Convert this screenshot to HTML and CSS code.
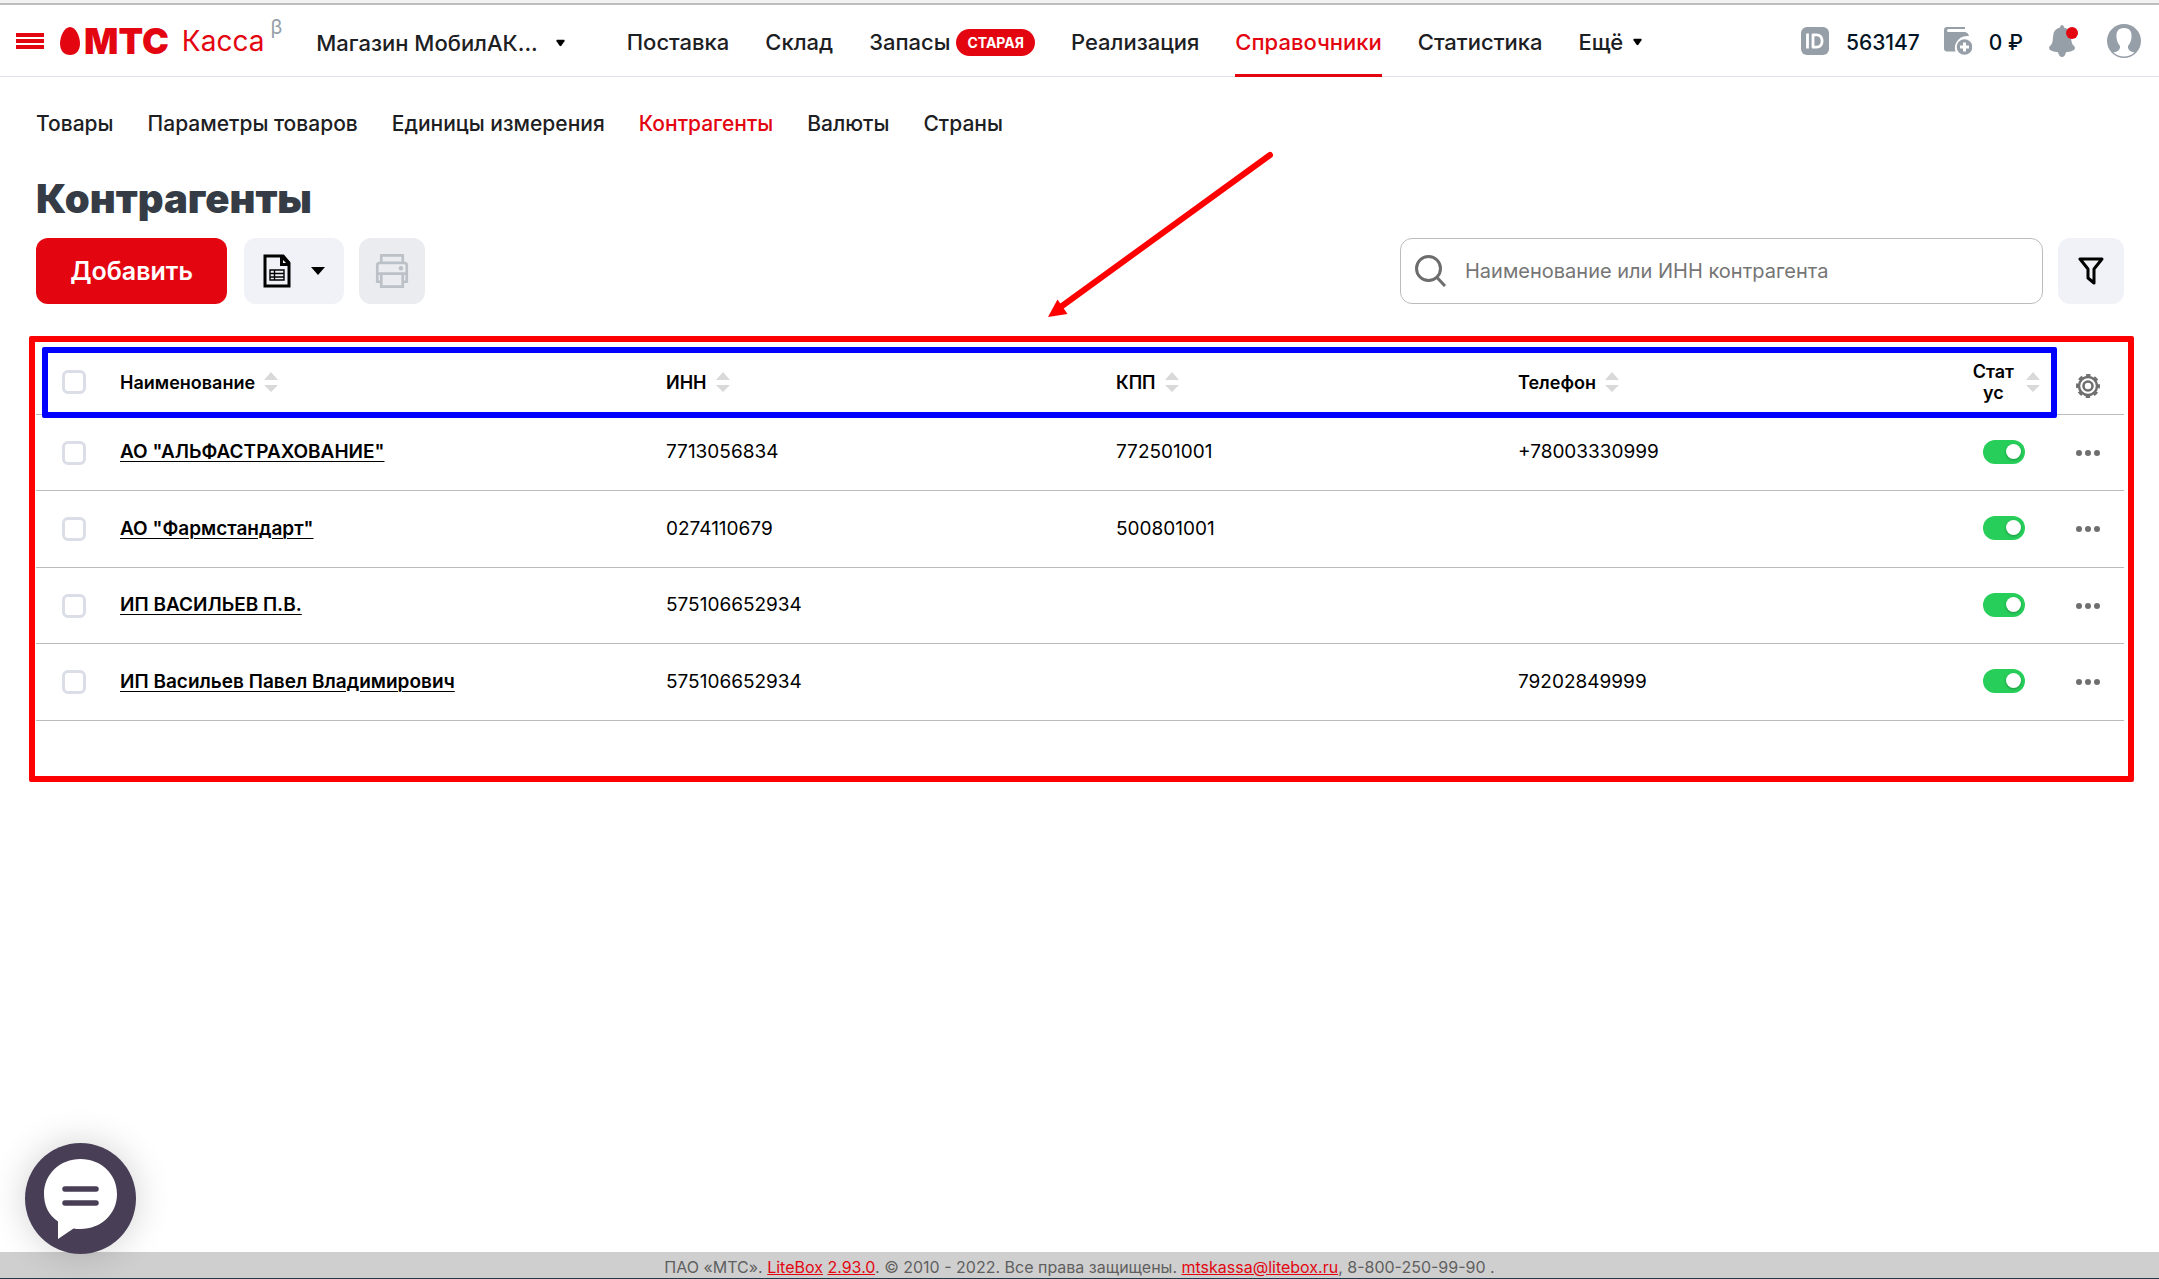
FILE: index.html
```html
<!DOCTYPE html>
<html lang="ru">
<head>
<meta charset="utf-8">
<meta name="viewport" content="width=device-width, initial-scale=1">
<title>Контрагенты — МТС Касса</title>
<link rel="stylesheet" href="styles.css">
</head>
<body>
<svg class="sprite" aria-hidden="true">
  <symbol id="sort" viewBox="0 0 14 20"><path d="M7 0l7 8H0zM0 13h14l-7 7z" fill="#d9d9d9"/></symbol>
  <symbol id="dots" viewBox="0 0 24 6"><circle cx="3" cy="3" r="3"/><circle cx="12" cy="3" r="3"/><circle cx="21" cy="3" r="3"/></symbol>
  <symbol id="caret" viewBox="0 0 10 8"><path d="M1 0.5h8q1 .5.4 1.500L6 7Q5 8 4 7L.6 2Q0 1 1 .5z"/></symbol>
</svg>
<div class="topline"></div>
<header class="header">
  <button class="burger" aria-label="Меню"><svg width="28" height="16" viewBox="0 0 28 16"><path d="M0 0h28v4H0zM0 6h28v4H0zM0 12h28v4H0z" fill="#e30611"/></svg></button>
  <a class="logo" href="#">
    <svg width="20" height="28" viewBox="0 0 20 28"><path d="M10 0C4.500 0 0 9 0 16.500 0 23.500 4 28 10 28s10-4.500 10-11.500C20 9 15.500 0 10 0z" fill="#e30611"/></svg>
    <span class="logo-brand">МТС</span><span class="logo-product">Касса</span><sup class="logo-beta">β</sup>
  </a>
  <button class="shop">Магазин МобилАК... <svg class="caret"><use href="#caret"/></svg></button>
  <nav class="nav">
    <a href="#">Поставка</a>
    <a href="#">Склад</a>
    <a href="#">Запасы<span class="badge">СТАРАЯ</span></a>
    <a href="#">Реализация</a>
    <a href="#" class="active">Справочники</a>
    <a href="#">Статистика</a>
    <a href="#">Ещё<svg class="caret"><use href="#caret"/></svg></a>
  </nav>
  <div class="account">
    <svg width="28" height="28" viewBox="0 0 28 28"><rect width="28" height="28" rx="6" fill="#969fa8"/><path d="M6.500 6.500v15M12 7.800h3.500c7.500 0 7.500 12.400 0 12.400H12z" fill="none" stroke="#fff" stroke-width="2.800" stroke-linejoin="round"/></svg>
    <span class="account-text account-id">563147</span>
    <svg class="wallet" width="28" height="28" viewBox="0 0 28 28"><path d="M3 0h18v2H4.500a1.500 1.500 0 0 0 0 3H21q3 .5 4 4-9-1-13 7-2 4-.5 8.500H3q-3 0-3-3V3q0-3 3-3z" fill="#969fa8"/><circle cx="20.500" cy="20" r="7.800" fill="#969fa8"/><path d="M20.500 15.500v9M16 20h9" stroke="#fff" stroke-width="3"/></svg>
    <span class="account-text account-sum">0 ₽</span>
    <button class="bell" aria-label="Уведомления"><svg width="30" height="32" viewBox="0 0 30 32"><path d="M13 0q2 0 2 2.500 7 1.500 7 9.500 0 7 3.500 9.500 1 2-.5 3.500-3 2-8 2.300Q16 32 13 32t-4-4.700Q4 27 1 25-.5 23.500.5 21.500 4 19 4 12q0-8 7-9.500Q11 0 13 0z" fill="#969fa8"/><circle cx="23" cy="8" r="6" fill="#e30611"/></svg></button>
    <button class="avatar" aria-label="Профиль"><svg width="34" height="34" viewBox="0 0 34 34"><circle cx="17" cy="17" r="17" fill="#969fa8"/><path d="M17 4c6 0 8 4 7.500 9.500-.3 4-2 6.500-3.500 8.500-.3 4 2 5.500 6.500 6.500Q23 32.500 17 32.500T6.500 28.500c4.500-1 6.800-2.500 6.500-6.500-1.500-2-3.200-4.500-3.500-8.500C9 8 11 4 17 4z" fill="#fff"/></svg></button>
  </div>
</header>
<main class="main">
  <nav class="subnav">
    <a href="#">Товары</a>
    <a href="#">Параметры товаров</a>
    <a href="#">Единицы измерения</a>
    <a href="#" class="active">Контрагенты</a>
    <a href="#">Валюты</a>
    <a href="#">Страны</a>
  </nav>
  <h1 class="title">Контрагенты</h1>
  <div class="toolbar">
    <button class="btn btn-add">Добавить</button>
    <button class="btn btn-file" aria-label="Экспорт">
      <svg width="28" height="34" viewBox="0 0 28 34"><path d="M2 2h18l6 7v23H2z" fill="none" stroke="#000" stroke-width="3"/><path d="M17 1h4l6 7v4H17z"/><path d="M20 6v3h3z" fill="#fff"/><path d="M7 16h14v10H7zM7 19.500h14M7 23h14M11.500 16v10" fill="none" stroke="#000" stroke-width="1.400"/></svg>
      <svg width="14" height="8" viewBox="0 0 14 8"><path d="M0 0h14L7 8z"/></svg>
    </button>
    <button class="btn btn-print" aria-label="Печать" disabled>
      <svg width="36" height="38" viewBox="0 0 36 38" fill="none" stroke="#bbc1c7" stroke-width="3"><path d="M6 9.500V1.500h24v8M6 31H1.500V13q0-3 3-3h27q3 0 3 3v18H30M1.500 22h33M6 22v14.500h24V22"/><circle cx="28" cy="16" r="2.500" fill="#bbc1c7" stroke="none"/></svg>
    </button>
    <label class="search">
      <svg width="32" height="32" viewBox="0 0 32 32" fill="none" stroke="#6d6d6d" stroke-width="3"><circle cx="13.500" cy="13.500" r="12"/><path d="M22 22.500L30 31"/></svg>
      <input type="search" aria-label="Поиск контрагента" placeholder="Наименование или ИНН контрагента">
    </label>
    <button class="btn btn-filter" aria-label="Фильтр">
      <svg width="26" height="28" viewBox="0 0 26 28" fill="none" stroke="#000" stroke-width="3" stroke-linejoin="round"><path d="M2 2h22l-8 10v14l-6-5v-9z"/></svg>
    </button>
  </div>
  <section class="grid">
    <table class="table">
      <colgroup><col class="c-check"><col class="c-name"><col class="c-inn"><col class="c-kpp"><col class="c-phone"><col class="c-status"><col class="c-menu"></colgroup>
      <thead>
        <tr>
          <th class="check"><input type="checkbox" aria-label="Выбрать все"></th>
          <th><span class="head">Наименование <svg class="sort"><use href="#sort"/></svg></span></th>
          <th><span class="head">ИНН <svg class="sort"><use href="#sort"/></svg></span></th>
          <th><span class="head">КПП <svg class="sort"><use href="#sort"/></svg></span></th>
          <th><span class="head">Телефон <svg class="sort"><use href="#sort"/></svg></span></th>
          <th><span class="head head-status"><span>Стат<br>ус</span><svg class="sort"><use href="#sort"/></svg></span></th>
          <th class="menu"><button class="gear" aria-label="Настройки"><svg width="24" height="24" viewBox="0 0 24 24" fill="none" stroke="#6f6f6f"><circle cx="12" cy="12" r="9" stroke-width="2.500"/><circle cx="12" cy="12" r="10.800" stroke-width="2.400" stroke-dasharray="4.500 3.980" stroke-dashoffset="2.250"/><circle cx="12" cy="12" r="4.500" stroke-width="2.600"/></svg></button></th>
        </tr>
      </thead>
      <tbody>
        <tr>
          <td class="check"><input type="checkbox" aria-label="Выбрать"></td>
          <td><a href="#">АО "АЛЬФАСТРАХОВАНИЕ"</a></td><td>7713056834</td><td>772501001</td><td>+78003330999</td>
          <td class="status"><input class="toggle" type="checkbox" role="switch" aria-label="Статус" checked></td>
          <td class="menu"><button aria-label="Действия"><svg class="dots"><use href="#dots"/></svg></button></td>
        </tr>
        <tr>
          <td class="check"><input type="checkbox" aria-label="Выбрать"></td>
          <td><a href="#">АО "Фармстандарт"</a></td><td>0274110679</td><td>500801001</td><td></td>
          <td class="status"><input class="toggle" type="checkbox" role="switch" aria-label="Статус" checked></td>
          <td class="menu"><button aria-label="Действия"><svg class="dots"><use href="#dots"/></svg></button></td>
        </tr>
        <tr>
          <td class="check"><input type="checkbox" aria-label="Выбрать"></td>
          <td><a href="#">ИП ВАСИЛЬЕВ П.В.</a></td><td>575106652934</td><td></td><td></td>
          <td class="status"><input class="toggle" type="checkbox" role="switch" aria-label="Статус" checked></td>
          <td class="menu"><button aria-label="Действия"><svg class="dots"><use href="#dots"/></svg></button></td>
        </tr>
        <tr>
          <td class="check"><input type="checkbox" aria-label="Выбрать"></td>
          <td><a href="#">ИП Васильев Павел Владимирович</a></td><td>575106652934</td><td></td><td>79202849999</td>
          <td class="status"><input class="toggle" type="checkbox" role="switch" aria-label="Статус" checked></td>
          <td class="menu"><button aria-label="Действия"><svg class="dots"><use href="#dots"/></svg></button></td>
        </tr>
      </tbody>
    </table>
    <div class="mark mark-table"></div>
    <div class="mark mark-head"></div>
    <svg class="arrow" width="230" height="168" viewBox="0 0 230 168"><path d="M222 5L14 156" stroke="#f00" stroke-width="6" stroke-linecap="round"/><path d="M0 167L9.500 149.500l10 14.500z" fill="#f00"/></svg>
  </section>
</main>
<footer class="footer"><p>ПАО «МТС». <a href="#">LiteBox</a> <a href="#">2.93.0</a>. © 2010 - 2022. Все права защищены. <a href="#">mtskassa@litebox.ru</a>, 8-800-250-99-90 .</p></footer>
<button class="chat" aria-label="Чат">
  <svg width="73" height="80" viewBox="0 0 73 80"><path d="M36.500 0C57 0 73 15 73 35S57 70 36.500 70q-4 0-7-.5L14 80V62.500Q0 53 0 35C0 15 16 0 36.500 0z" fill="#fff"/><path d="M21 30h31M21 44h31" stroke="#483f57" stroke-width="5.500" stroke-linecap="round"/></svg>
</button>
</body>
</html>
```
FILE: styles.css
```css
* { box-sizing: border-box; }
body {
  margin: 0;
  min-height: 100vh;
  display: flex;
  flex-direction: column;
  background: #fff;
  color: #1d2023;
  font-family: Inter, "Liberation Sans", sans-serif;
}
button { padding: 0; border: 0; background: none; font: inherit; color: inherit; cursor: pointer; }
a { color: inherit; text-decoration: none; }
svg { display: block; flex: none; }
.sprite { position: absolute; width: 0; height: 0; }

.topline { height: 5px; background: #f2f2f2; border-bottom: 2px solid #bdbdbd; }
.header {
  display: flex;
  align-items: center;
  height: 72px;
  padding: 0 18px 0 16px;
  border-bottom: 1px solid #e2e2ea;
  font-size: 22px;
  font-weight: 500;
  white-space: nowrap;
}
.logo { display: flex; align-items: center; margin-left: 16px; color: #e30611; line-height: 40px; }
.logo-brand { margin-left: 4px; font-size: 36px; font-weight: 900; }
.logo-product { margin-left: 13px; font-size: 28px; font-weight: 400; }
.logo-beta { margin-left: 6px; font-size: 20px; font-weight: 400; line-height: 12px; color: #969fa8; align-self: flex-start; }
.shop { display: flex; align-items: center; gap: 18px; margin-left: 34px; padding-top: 4px; }
.caret { width: 9px; height: 8px; }
.nav { display: flex; align-self: stretch; gap: 36px; margin-left: 62px; }
.nav a { display: flex; align-items: center; margin-bottom: -1px; padding-top: 5px; border-bottom: 3px solid transparent; }
.nav .caret { margin-left: 10px; }
.active { color: #e30611; }
.nav .active { border-bottom-color: #e30611; }
.badge {
  margin-left: 6px;
  padding: 0 11px;
  border-radius: 14px;
  background: #e30611;
  color: #fff;
  font-size: 14px;
  font-weight: 700;
  line-height: 27px;
}
.account { display: flex; align-items: center; margin-left: auto; color: #001424; font-size: 21px; }
.account-text { padding-top: 4px; }
.account-id { margin-left: 17px; }
.wallet { margin-left: 24px; }
.account-sum { margin-left: 17px; }
.bell { margin-left: 26px; }
.avatar { margin-left: 28px; }

.main { flex: 1; padding: 33px 35px 0 36px; }
.subnav { display: flex; gap: 34px; font-size: 21px; font-weight: 500; line-height: 28px; }
.title { margin: 37px 0 15px; font-size: 40px; font-weight: 900; line-height: 48px; color: #363c45; }
.toolbar { display: flex; }
.btn { display: flex; align-items: center; justify-content: center; height: 66px; border-radius: 12px; background: #f1f2f7; }
.btn-add { width: 191px; background: #e30611; color: #fff; font-size: 25px; font-weight: 600; }
.btn-file { width: 100px; margin-left: 17px; gap: 20px; }
.btn-print { width: 66px; margin-left: 15px; background: #ebecf0; }
.btn-print svg { height: 34px; }
.btn-filter { width: 66px; margin-left: 15px; }
.search {
  display: flex;
  align-items: center;
  width: 643px;
  margin-left: auto;
  padding: 0 14px;
  gap: 18px;
  border: 1px solid #bcbcbc;
  border-radius: 12px;
}
.search input { flex: 1; border: 0; outline: 0; padding: 0; background: none; font: 400 20px Inter, "Liberation Sans", sans-serif; }
.search input::placeholder { color: #757575; opacity: 1; }

.grid { position: relative; margin-top: 44px; }
.table { width: 100%; table-layout: fixed; border-collapse: separate; border-spacing: 0; color: #000; font-size: 19px; }
.c-check { width: 84px; }
.c-name { width: 546px; }
.c-inn { width: 450px; }
.c-kpp { width: 402px; }
.c-phone { width: 402px; }
.c-status { width: 132px; }
.c-menu { width: 72px; }
.table th, .table td { height: 77px; padding: 0; border-bottom: 1px solid #bcbcbc; text-align: left; font-weight: 400; }
.table tr:nth-child(odd) td { height: 76px; }
.table th, .table tr:nth-child(odd) th { height: 67px; padding-top: 2px; font-size: 18px; line-height: 21px; font-weight: 600; }
.table td { padding-bottom: 2px; }
.table td a { font-weight: 600; text-decoration: underline; text-underline-offset: 3px; text-decoration-thickness: 1px; }
.head { display: flex; align-items: center; gap: 9px; }
.head-status { justify-content: flex-end; gap: 12px; padding-right: 12px; text-align: center; }
.sort { width: 14px; height: 20px; }
.table .check { padding-left: 26px; }
.table td.check, .table td.menu { padding-bottom: 0; }
.check input { display: block; appearance: none; width: 24px; height: 24px; margin: 0; border: 3px solid #dbdee6; border-radius: 6px; background: #fff; }
.table .status { padding-left: 63px; }
.toggle { display: block; appearance: none; position: relative; width: 42px; height: 24px; margin: 0; border-radius: 12px; background: #27cf5a; }
.toggle::after { content: ""; position: absolute; top: 4px; right: 4px; width: 15px; height: 15px; border-radius: 50%; background: #fff; box-shadow: 0 1px 3px rgba(0, 0, 0, .3); }
.menu button { display: block; margin-left: 24px; }
.dots { width: 24px; height: 6px; fill: #6f6f6f; }
.table .menu .gear { margin-top: 8px; }
.mark { position: absolute; pointer-events: none; border: 6px solid #f00; border-radius: 2px; }
.mark-table { left: -7px; right: -10px; top: -12px; bottom: -61px; }
.mark-head { left: 6px; right: 67px; top: -1px; height: 71px; border-color: #00f; }
.arrow { position: absolute; left: 1012px; top: -198px; pointer-events: none; }

.footer { height: 27px; background: #cfcfcf; border-bottom: 1px solid #1f3a4a; color: #5f5f5f; text-align: center; font-size: 16px; line-height: 30px; }
.footer p { margin: 0; }
.footer a { color: #e30611; text-decoration: underline; }
.chat {
  position: fixed;
  left: 25px;
  bottom: 25px;
  display: flex;
  justify-content: center;
  width: 111px;
  height: 111px;
  padding-top: 16px;
  border-radius: 50%;
  background: #483f57;
  box-shadow: 0 0 36px rgba(0, 0, 0, .18);
}
```
